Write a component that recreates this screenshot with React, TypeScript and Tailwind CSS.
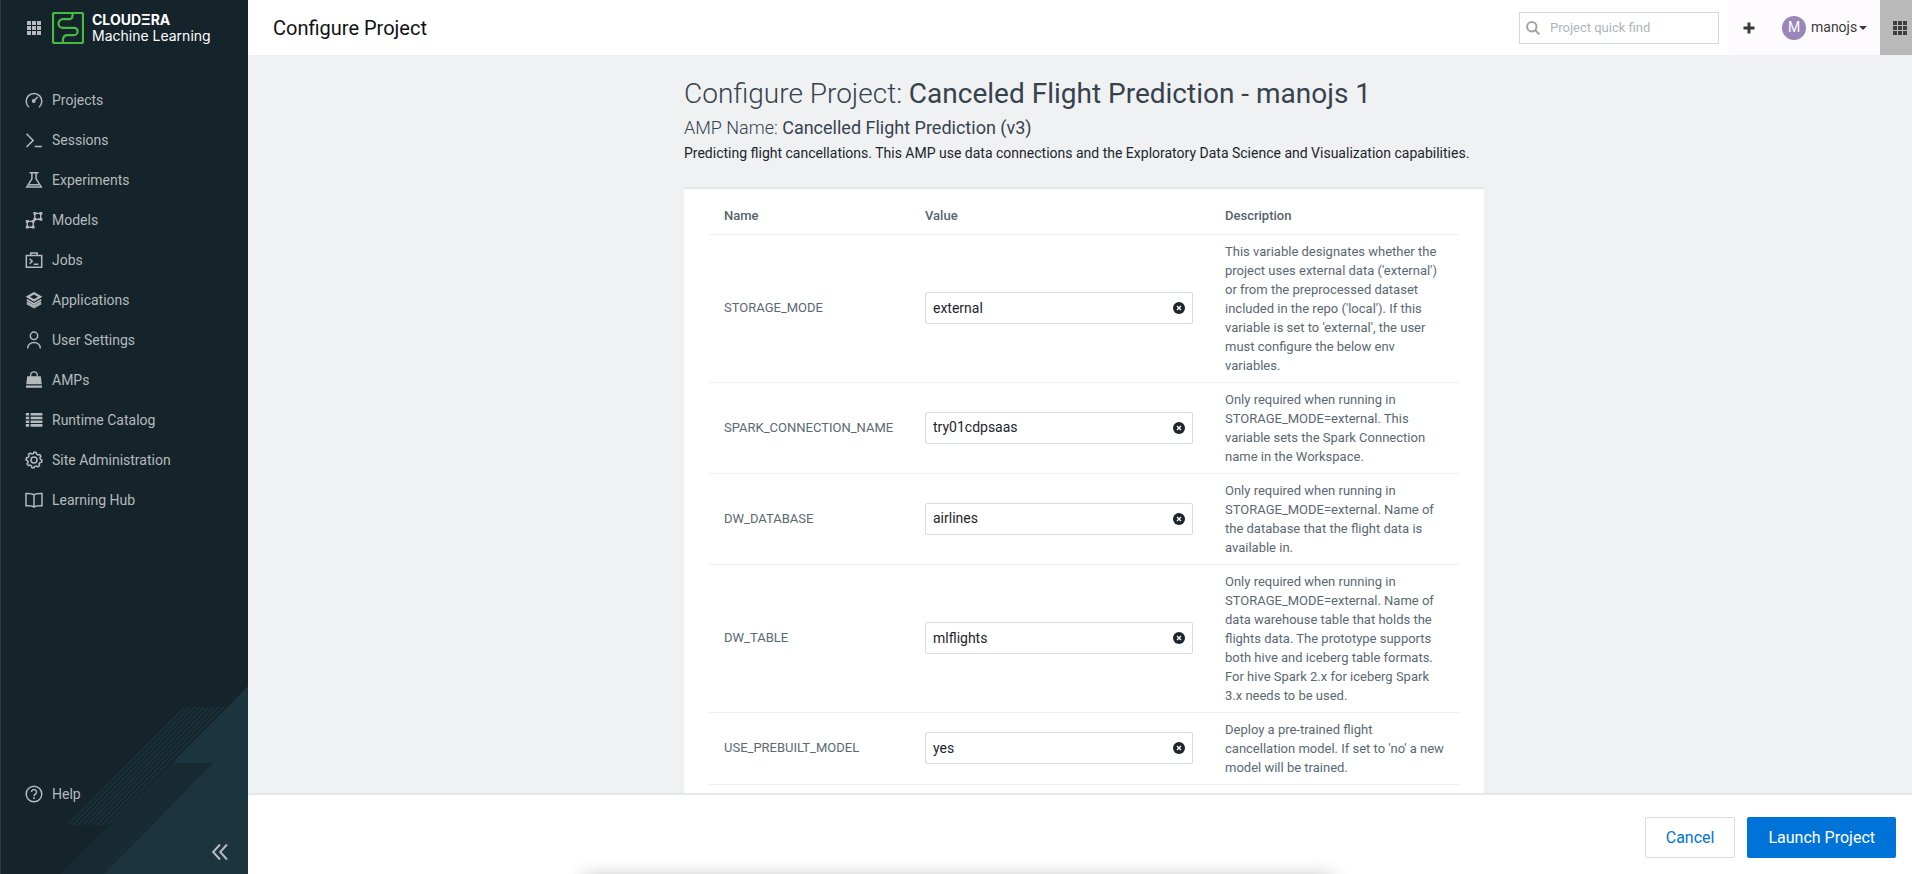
import { useState } from "react";
import type { ReactNode } from "react";

function Icon({ children }: { children: ReactNode }) {
  return (
    <svg
      viewBox="0 0 18 18"
      className="size-[18px] shrink-0"
      fill="none"
      stroke="currentColor"
      strokeWidth="1.5"
      aria-hidden="true"
    >
      {children}
    </svg>
  );
}

const gear = Array.from({ length: 64 }, (_, i) => {
  const angle = (i / 64) * Math.PI * 2;
  const radius = i % 8 < 4 ? 7.9 : 6.4;
  return `${(9 + radius * Math.sin(angle)).toFixed(2)},${(9 - radius * Math.cos(angle)).toFixed(2)}`;
}).join(" ");

const navItems: { label: string; icon: ReactNode }[] = [
  {
    label: "Projects",
    icon: (
      <Icon>
        <path d="M4 16.2A7.8 7.8 0 1 1 14 16.2" />
        <path d="M8.4 10.2 12.6 6" strokeWidth="1.6" />
        <circle cx="8.7" cy="10" r="1.9" fill="currentColor" stroke="none" />
      </Icon>
    ),
  },
  {
    label: "Sessions",
    icon: (
      <Icon>
        <path d="M1.5 2.7 8.2 9.4 1.5 16M9.8 15.6h7" />
      </Icon>
    ),
  },
  {
    label: "Experiments",
    icon: (
      <Icon>
        <path d="M4.4 1.8h9.2M6.9 1.8v6L1.8 15.9h14.4L11.1 7.8v-6" />
        <path d="M4 13.8h10" />
      </Icon>
    ),
  },
  {
    label: "Models",
    icon: (
      <Icon>
        <path d="M9.8 2.4h5.9v5.8H9.8zM2.3 10.4h5.9v5.8H2.3zM8.2 10.4l1.6-2.2" strokeWidth="1.4" />
        <path
          d="M8.4 1h2.8v2.8H8.4zM14.5 1h2.8v2.8h-2.8zM14.5 6.9h2.8v2.8h-2.8zM8.4 6.9h2.8v2.8H8.4zM.8 8.9h2.8v2.8H.8zM6.8 8.9h2.8v2.8H6.8zM.8 14.8h2.8v2.8H.8zM6.8 14.8h2.8v2.8H6.8z"
          fill="currentColor"
          stroke="none"
        />
      </Icon>
    ),
  },
  {
    label: "Jobs",
    icon: (
      <Icon>
        <path d="M1.3 4.6h15.4v11.6H1.3zM5.8 4.6V1.9h6.4v2.7M8.8 13.2h4.6M4.6 7.8l2.6 2.4-2.6 2.4" />
      </Icon>
    ),
  },
  {
    label: "Applications",
    icon: (
      <Icon>
        <path d="M9 2.2 15.2 5.8 9 9.4 2.8 5.8z" strokeWidth="2.2" />
        <path d="M1.8 8.8l7.2 4.1 7.2-4.1M1.8 11.2l7.2 4.1 7.2-4.1" strokeWidth="1.7" />
        <path d="M1.8 12.8l7.2 4.1 7.2-4.1" strokeWidth="1.2" />
      </Icon>
    ),
  },
  {
    label: "User Settings",
    icon: (
      <Icon>
        <circle cx="9" cy="4.8" r="3.7" />
        <path d="M2.8 17.6v-1.1a6.2 5 0 0 1 12.4 0v1.1" />
      </Icon>
    ),
  },
  {
    label: "AMPs",
    icon: (
      <Icon>
        <path d="M2.2 5.2h13.6l1 8H1.2zM1 14.4h16v2.4H1z" fill="currentColor" stroke="none" />
        <path d="M5.7 7.4V4.2a3.3 3.3 0 0 1 6.6 0v3.2" strokeWidth="1.3" />
      </Icon>
    ),
  },
  {
    label: "Runtime Catalog",
    icon: (
      <Icon>
        <path
          d="M.8 2h3.4v2.6H.8zM.8 5.7h3.4v2.6H.8zM.8 9.4h3.4V12H.8zM.8 13.1h3.4v2.6H.8zM5.6 2h11.8v2.6H5.6zM5.6 5.7h11.8v2.6H5.6zM5.6 9.4h11.8V12H5.6zM5.6 13.1h11.8v2.6H5.6z"
          fill="currentColor"
          stroke="none"
        />
      </Icon>
    ),
  },
  {
    label: "Site Administration",
    icon: (
      <Icon>
        <polygon points={gear} strokeLinejoin="round" />
        <circle cx="9" cy="9" r="3" />
      </Icon>
    ),
  },
  {
    label: "Learning Hub",
    icon: (
      <Icon>
        <path d="M9 4C7.8 2.5 5 2.3 1 2.5v12.2c4-.2 6.8 0 8 1.4 1.2-1.4 4-1.6 8-1.4V2.5C13 2.3 10.2 2.5 9 4zM9 4v12" />
      </Icon>
    ),
  },
];

const variables = [
  {
    name: "STORAGE_MODE",
    value: "external",
    description:
      "This variable designates whether the project uses external data ('external') or from the preprocessed dataset included in the repo ('local'). If this variable is set to 'external', the user must configure the below env variables.",
  },
  {
    name: "SPARK_CONNECTION_NAME",
    value: "try01cdpsaas",
    description:
      "Only required when running in STORAGE_MODE=external. This variable sets the Spark Connection name in the Workspace.",
  },
  {
    name: "DW_DATABASE",
    value: "airlines",
    description:
      "Only required when running in STORAGE_MODE=external. Name of the database that the flight data is available in.",
  },
  {
    name: "DW_TABLE",
    value: "mlflights",
    description:
      "Only required when running in STORAGE_MODE=external. Name of data warehouse table that holds the flights data. The prototype supports both hive and iceberg table formats. For hive Spark 2.x for iceberg Spark 3.x needs to be used.",
  },
  {
    name: "USE_PREBUILT_MODEL",
    value: "yes",
    description:
      "Deploy a pre-trained flight cancellation model. If set to 'no' a new model will be trained.",
  },
];

function GridDots() {
  return (
    <svg viewBox="0 0 14 14" className="size-[14px]" fill="currentColor" aria-hidden="true">
      {[0, 5, 10].map((y) =>
        [0, 5, 10].map((x) => <rect key={`${x}-${y}`} x={x} y={y} width="4" height="4" />),
      )}
    </svg>
  );
}

function Sidebar() {
  return (
    <aside className="relative flex w-[248px] shrink-0 flex-col border-l border-[#2c3b40] bg-[#15232a] text-[#b4babd]">
      <svg
        viewBox="0 0 248 190"
        className="pointer-events-none absolute right-0 bottom-0 h-[190px] w-[248px]"
        aria-hidden="true"
      >
        <path d="M172 79H213L104 190H60z" fill="#182b33" />
        <path d="M248 2 172 79H213L104 190H248z" fill="#1c343e" />
        {Array.from({ length: 9 }, (_, i) => (
          <path
            key={i}
            d={`M${185 + i * 4.8} 23L${68 + i * 4.8} 141`}
            stroke="#1b343c"
            strokeWidth="1.6"
          />
        ))}
      </svg>

      <div className="flex h-[55px] items-center pl-[26px]">
        <button type="button" aria-label="Switch application">
          <GridDots />
        </button>
        <svg viewBox="0 0 32 32" className="ml-[11px] size-8" fill="none" stroke="#45bd45" strokeWidth="2.2" aria-hidden="true">
          <rect x="1" y="1" width="30" height="30" rx="1.5" />
          <path d="M20.5 1v2.5q0 3.7-3.7 3.7h-6a4.3 4.3 0 0 0 0 8.6H22a3.6 3.6 0 0 1 0 7.3h-6.3q-4.7 0-4.7 4.7V31" />
        </svg>
        <div className="ml-2 flex flex-col text-white">
          <span className="font-[Inter,sans-serif] text-[14px] leading-4 font-bold">CLOUDΞRA</span>
          <span className="font-[Inter,sans-serif] text-[14px] leading-4">Machine Learning</span>
        </div>
      </div>

      <nav className="mt-[25px] flex flex-1 flex-col">
        {navItems.map((item) => (
          <a key={item.label} href="#" className="flex h-10 items-center gap-[9px] pl-6 text-[14px]">
            {item.icon}
            {item.label}
          </a>
        ))}
      </nav>

      <a href="#" className="relative flex h-10 items-center gap-[9px] pl-6 text-[14px]">
        <Icon>
          <circle cx="9" cy="9" r="7.8" />
          <path d="M6.5 7a2.5 2.5 0 1 1 3.9 2.1C9.4 9.8 9 10.2 9 11.2M9 12.3v1.6" />
        </Icon>
        Help
      </a>
      <div className="relative flex h-[60px] items-end justify-end pr-5 pb-[13px]">
        <button type="button" aria-label="Collapse menu">
          <svg viewBox="0 0 16 18" className="block h-[18px] w-4" fill="none" stroke="currentColor" strokeWidth="2" aria-hidden="true">
            <path d="M8 1.5 1.2 9 8 16.5M15 1.5 8.2 9 15 16.5" />
          </svg>
        </button>
      </div>
    </aside>
  );
}

function TopBar() {
  return (
    <header className="flex h-[55px] shrink-0 items-stretch bg-white">
      <div className="flex flex-1 items-center justify-between pr-[10px] pl-[25px]">
        <span className="text-[20px] text-[#0f1214]">Configure Project</span>
        <label className="flex h-8 w-[200px] items-center gap-[10px] border border-[#d5d8da] px-[6px]">
          <svg viewBox="0 0 14 14" className="size-[14px] shrink-0" fill="none" stroke="#a3a3a3" strokeWidth="2" aria-hidden="true">
            <circle cx="5.8" cy="5.8" r="4.7" />
            <path d="M9.3 9.3 13.3 13.3" />
          </svg>
          <input
            type="search"
            aria-label="Project quick find"
            placeholder="Project quick find"
            className="w-full min-w-0 text-[13px] outline-none placeholder:text-[#b0b5b9]"
          />
        </label>
      </div>
      <div className="flex w-[151px] items-center bg-[#fdfbfd] pl-[14px]">
        <button type="button" aria-label="Create" className="text-[#3a3a3a]">
          <svg viewBox="0 0 12 12" className="size-3" stroke="currentColor" strokeWidth="3" aria-hidden="true">
            <path d="M6 .5v11M.5 6h11" />
          </svg>
        </button>
        <button type="button" className="ml-[27px] flex items-center text-[14px] text-[#3a3a3a]">
          <span className="mr-[5px] flex size-6 items-center justify-center rounded-full bg-[#9b86b8] text-[14px] text-white">
            M
          </span>
          manojs
          <svg viewBox="0 0 8 4" className="ml-[2px] h-1 w-2" fill="currentColor" aria-hidden="true">
            <path d="M0 0h8L4 4z" />
          </svg>
        </button>
      </div>
      <button type="button" aria-label="Open panel" className="flex w-8 items-center bg-[#b9b9b9] pl-[13px] text-[#3f3f3f]">
        <GridDots />
      </button>
    </header>
  );
}

function VariableTable() {
  const [values, setValues] = useState(variables.map((v) => v.value));
  const update = (index: number, value: string) =>
    setValues((current) => current.map((v, i) => (i === index ? value : v)));

  return (
    <table className="w-full table-fixed border-collapse text-left text-[13px] text-[#5a6872]">
      <thead>
        <tr className="h-9 border-b border-[#eff1f2] text-[#56646e]">
          <th className="w-[201px] px-4 font-medium">Name</th>
          <th className="w-[300px] px-4 font-medium">Value</th>
          <th className="px-4 font-medium">Description</th>
        </tr>
      </thead>
      <tbody>
        {variables.map((variable, i) => (
          <tr key={variable.name} className="border-b border-[#eff1f2]">
            <td className="px-4">
              <label htmlFor={variable.name}>{variable.name}</label>
            </td>
            <td className="px-4">
              <div className="flex h-8 items-center rounded-[2px] border border-[#d9dcde] px-[7px]">
                <input
                  id={variable.name}
                  type="text"
                  value={values[i]}
                  onChange={(event) => update(i, event.target.value)}
                  className="w-full min-w-0 text-[14px] text-[#1b252b] outline-none"
                />
                <button type="button" aria-label={`Clear ${variable.name}`} onClick={() => update(i, "")}>
                  <svg viewBox="0 0 12 12" className="size-3" aria-hidden="true">
                    <circle cx="6" cy="6" r="6" fill="#1b252b" />
                    <path d="M4 4l4 4M8 4 4 8" stroke="#fff" strokeWidth="1.3" />
                  </svg>
                </button>
              </div>
            </td>
            <td className="px-4 py-[7px] leading-[19px]">{variable.description}</td>
          </tr>
        ))}
      </tbody>
    </table>
  );
}

export default function App() {
  return (
    <div className="flex h-screen overflow-hidden bg-[#f0f1f3] font-[Roboto,sans-serif]">
      <Sidebar />
      <div className="flex min-w-0 flex-1 flex-col">
        <TopBar />
        <main className="min-h-0 flex-1 overflow-y-auto pl-2 [scrollbar-width:none]">
          <div className="mx-auto max-w-[800px] pt-[19px] pb-10">
            <h1 className="text-[28px] leading-10 font-light text-[#36434d]">
              Configure Project: <span className="font-normal">Canceled Flight Prediction - manojs 1</span>
            </h1>
            <h2 className="text-[18px] leading-7 font-light text-[#36434d]">
              AMP Name: <span className="font-normal">Cancelled Flight Prediction (v3)</span>
            </h2>
            <p className="text-[14px] leading-[22px] text-[#1b252b]">
              Predicting flight cancellations. This AMP use data connections and the Exploratory Data Science and
              Visualization capabilities.
            </p>
            <section className="mt-[23px] border-t-2 border-[#e5e7ea] bg-white px-6 pt-[9px] pb-6">
              <VariableTable />
            </section>
          </div>
        </main>
        <footer className="relative flex h-[81px] shrink-0 items-start justify-end gap-3 overflow-hidden border-t-2 border-[#e6e8e9] bg-white pt-[22px] pr-4 text-[16px]">
          <div className="pointer-events-none absolute top-full right-[584px] left-[340px] mt-2 h-10 shadow-[0_0_20px_4px_rgba(0,0,0,0.3)]" />
          <button type="button" className="h-[41px] rounded-[2px] border border-[#d9dcde] px-5 text-[#0073d8]">
            Cancel
          </button>
          <button type="button" className="h-[41px] rounded-[2px] bg-[#0073d8] px-[21px] text-white">
            Launch Project
          </button>
        </footer>
      </div>
    </div>
  );
}
